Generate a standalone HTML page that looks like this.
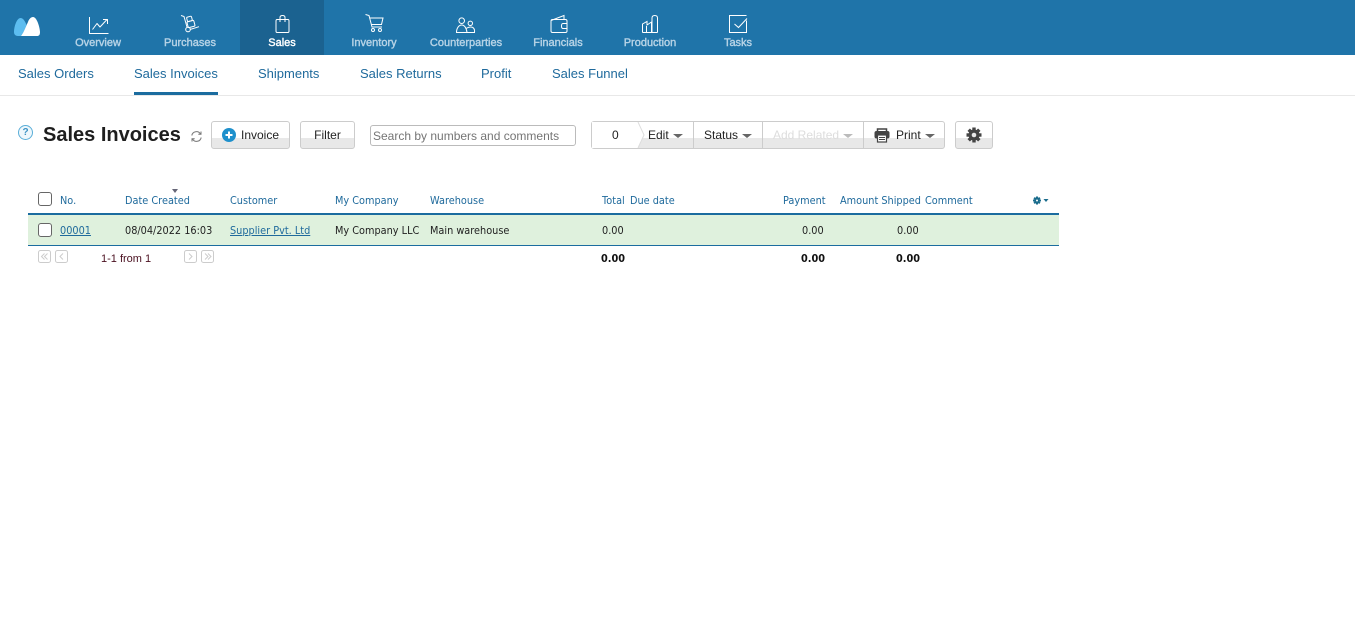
<!DOCTYPE html>
<html><head><meta charset="utf-8"><style>
html,body{margin:0;padding:0;width:1355px;height:631px;overflow:hidden;background:#fff;font-family:"Liberation Sans",sans-serif}
.a{position:absolute;white-space:nowrap}
#top{position:absolute;left:0;top:0;width:1355px;height:55px;background:#1f74a9}
.nl{position:absolute;top:37px;font-size:11px;line-height:13px;font-weight:normal;color:#b7d3e6;transform:translateX(-50%);white-space:nowrap;-webkit-text-stroke:.4px #b7d3e6}
.s{position:absolute;top:66px;font-size:13px;line-height:16px;color:#1f6a9c;white-space:nowrap}
.btn{position:absolute;box-sizing:border-box;height:28px;top:121px;border:1px solid #ccc;border-radius:3px;background:linear-gradient(#fff 0,#fff 16px,#e8e8e8 16px,#e8e8e8 100%);font-size:12px;color:#222;line-height:26px;white-space:nowrap}
.t{position:absolute;font-family:"DejaVu Sans",sans-serif;font-size:11px;line-height:13px;white-space:nowrap;transform:scaleX(.885);transform-origin:0 0}
.h{color:#1f6a9c;top:194px}
.r{color:#222;top:224px}
.b{font-weight:bold;font-size:11px;color:#111;top:252px}
.lnk{color:#1f6a9c;text-decoration:underline}
.car{display:inline-block;width:0;height:0;border-left:5px solid transparent;border-right:5px solid transparent;border-top:4px solid #666;vertical-align:1px;margin-left:4px}
.cb{position:absolute;box-sizing:border-box;width:14px;height:14px;left:38px;border:1px solid #666;border-radius:3px;background:#fff}
svg{position:absolute;overflow:visible}
</style></head><body>
<div id="top"></div>
<div class="a" style="left:240px;top:0;width:84px;height:55px;background:#1b6290"></div>

<svg style="left:14px;top:16px" width="27" height="21" viewBox="0 0 27 21">
<path d="M0 16C0 10 3 2 6.500 2C9 2 11 5 12.500 9C11 13 9 17 7 20H4C1 20 0 18 0 16z" fill="#5dbdf0"/>
<path d="M7 20C10 16 12 10 14 6C15 3 17 1 19 1C23 1 26 12 26 16C26 19 25 20 23 20z" fill="#fff"/>
</svg>

<svg style="left:89px;top:17px" width="20" height="17" fill="none" stroke="#fff" stroke-width="1"><path d="M0.500 0V16.500H19.500M3.500 12.500L8 6.500L11 10L18 2.500M14 2.500H18.500V7" stroke-linejoin="round"/></svg>
<svg style="left:180px;top:15px" width="20" height="19" fill="none" stroke="#fff" stroke-width="1"><path d="M1 0.500L4 1.500L7 12M10 14.500L19 11.700"/><circle cx="8" cy="14.500" r="2.300"/><rect x="7.500" y="6" width="7" height="6" rx="1" transform="rotate(-15 11 9)"/><rect x="7" y="1.500" width="5" height="4.500" rx="1" transform="rotate(-15 10 4)"/></svg>
<svg style="left:275px;top:15px" width="15" height="18" fill="none" stroke="#fff" stroke-width="1"><path d="M2 4.500H13Q14 4.500 14 6V16Q14 17.500 13 17.500H2Q1 17.500 1 16V6Q1 4.500 2 4.500zM5 7V2.500Q5 0.500 7.500 0.500T10 2.500V7"/></svg>
<svg style="left:365px;top:14px" width="19" height="19" fill="none" stroke="#fff" stroke-width="1"><path d="M0.500 0.500L4 1.500L7 13H17M4.500 4H18L16.500 10.500H6"/><circle cx="8" cy="16" r="1.500"/><circle cx="15" cy="16" r="1.500"/></svg>
<svg style="left:456px;top:17px" width="20" height="17" fill="none" stroke="#fff" stroke-width="1"><circle cx="5.700" cy="3.700" r="2.800"/><path d="M0.500 15.500C0.500 11 3 8 5.700 8S10.500 11 11 15.500H0.500z"/><circle cx="14.300" cy="6.300" r="2.200"/><path d="M11 15.500H18.500C19 12 17.500 10 14.500 10Q12.500 10 10 11.500"/></svg>
<svg style="left:550px;top:15px" width="18" height="18" fill="none" stroke="#fff" stroke-width="1"><path d="M1 5.500L14 0.500V4.500M2.500 4.500H15.500Q17 4.500 17 6V16Q17 17.500 15.500 17.500H2.500Q1 17.500 1 16V6Q1 4.500 2.500 4.500zM17 8.500H13Q11.500 8.500 11.500 11T13 13.500H17"/></svg>
<svg style="left:642px;top:15px" width="17" height="18" fill="none" stroke="#fff" stroke-width="1"><path d="M0.500 17.500V9L5 6.500V10L9.500 7V17.500M4.500 17.500V11M0.500 17.500H15.500M10 17.500V3Q10 0.500 12.750 0.500T15.500 3V17.500"/></svg>
<svg style="left:729px;top:15px" width="18" height="18" fill="none" stroke="#fff" stroke-width="1"><path d="M17.500 0.500H0.500V17.500H17.500V5.500"/><path d="M5.500 9L9.500 12.500L18 3.500"/></svg>

<div class="nl" style="left:98px">Overview</div>
<div class="nl" style="left:190px">Purchases</div>
<div class="nl" style="left:282px;color:#fff;-webkit-text-stroke:.4px #fff">Sales</div>
<div class="nl" style="left:374px">Inventory</div>
<div class="nl" style="left:466px">Counterparties</div>
<div class="nl" style="left:558px">Financials</div>
<div class="nl" style="left:650px">Production</div>
<div class="nl" style="left:738px">Tasks</div>

<div class="s" style="left:18px">Sales Orders</div>
<div class="s" style="left:134px">Sales Invoices</div>
<div class="s" style="left:258px">Shipments</div>
<div class="s" style="left:360px">Sales Returns</div>
<div class="s" style="left:481px">Profit</div>
<div class="s" style="left:552px">Sales Funnel</div>
<div class="a" style="left:134px;top:92px;width:84px;height:3px;background:#1b6c9f"></div>
<div class="a" style="left:0;top:95px;width:1355px;height:1px;background:#e8e8e8"></div>

<div class="a" style="left:18px;top:125px;width:15px;height:15px;box-sizing:border-box;border:1px solid #5aaed8;border-radius:50%;background:#eef7fc;color:#3d93c4;font-size:10px;font-weight:bold;line-height:13px;text-align:center">?</div>
<div class="a" style="left:43px;top:123px;font-size:20px;line-height:24px;font-weight:bold;color:#1e1e1e">Sales Invoices</div>
<svg style="left:191px;top:131px" width="11" height="11" fill="none" stroke="#777" stroke-width="1"><path d="M0.800 4.500A4.700 4.700 0 0 1 9.500 3M10 0.500V3.300H7.300M10.200 6.500A4.700 4.700 0 0 1 1.500 8M1 10.500V7.700H3.700"/></svg>

<div class="btn" style="left:211px;width:79px;padding-left:29px">Invoice</div>
<svg style="left:222px;top:128px" width="14" height="14"><circle cx="7" cy="7" r="7" fill="#1e90cc"/><path d="M7 3.500V10.500M3.500 7H10.500" stroke="#fff" stroke-width="2"/></svg>
<div class="btn" style="left:300px;width:55px;text-align:center">Filter</div>

<div class="a" style="left:370px;top:125px;width:206px;height:21px;box-sizing:border-box;border:1px solid #bbb;border-radius:3px;background:#fff;font-size:12px;line-height:20px;color:#757575;padding-left:2px">Search by numbers and comments</div>

<div class="btn" style="left:591px;width:354px"></div>
<svg style="left:592px;top:122px" width="60" height="26"><path d="M0 0H46L52 13L46 26H0z" fill="#fff"/><path d="M46 0L52 13L46 26" fill="none" stroke="#ddd"/></svg>
<div class="a" style="left:612px;top:128px;font-size:12px;line-height:14px;color:#222">0</div>
<div class="a" style="left:648px;top:128px;font-size:12px;line-height:14px;color:#222">Edit<span class="car"></span></div>
<div class="a" style="left:693px;top:122px;width:1px;height:26px;background:#ccc"></div>
<div class="a" style="left:704px;top:128px;font-size:12px;line-height:14px;color:#222">Status<span class="car"></span></div>
<div class="a" style="left:762px;top:122px;width:1px;height:26px;background:#ccc"></div>
<div class="a" style="left:773px;top:128px;font-size:12px;line-height:14px;color:#ddd">Add Related<span class="car" style="border-top-color:#bbb"></span></div>
<div class="a" style="left:863px;top:122px;width:1px;height:26px;background:#ccc"></div>
<svg style="left:874px;top:128px" width="16" height="15"><path d="M3.500 3V1H12.500V3" fill="none" stroke="#444" stroke-width="1.500"/><rect x="0.500" y="3" width="15" height="7.500" rx="2" fill="#444"/><rect x="3.500" y="7" width="9" height="7" fill="#fff" stroke="#444" stroke-width="1.200"/><path d="M5 9.500H11M5 11.500H11" stroke="#444"/></svg>
<div class="a" style="left:896px;top:128px;font-size:12px;line-height:14px;color:#222">Print<span class="car"></span></div>

<div class="btn" style="left:955px;width:38px"></div>
<svg style="left:966px;top:127px" width="16" height="16" viewBox="0 0 16 16"><g fill="#444"><circle cx="8" cy="8" r="5.500"/><rect x="6.300" y="0.500" width="3.400" height="15"/><rect x="6.300" y="0.500" width="3.400" height="15" transform="rotate(45 8 8)"/><rect x="6.300" y="0.500" width="3.400" height="15" transform="rotate(90 8 8)"/><rect x="6.300" y="0.500" width="3.400" height="15" transform="rotate(135 8 8)"/></g><circle cx="8" cy="8" r="2.300" fill="#e8e8e8"/></svg>

<div class="cb" style="top:192px"></div>
<div class="t h" style="left:60px">No.</div>
<div class="a" style="left:172px;top:189px;width:0;height:0;border-left:3.500px solid transparent;border-right:3.500px solid transparent;border-top:4px solid #667"></div>
<div class="t h" style="left:125px">Date Created</div>
<div class="t h" style="left:230px">Customer</div>
<div class="t h" style="left:335px">My Company</div>
<div class="t h" style="left:430px">Warehouse</div>
<div class="t h" style="left:602px">Total</div>
<div class="t h" style="left:630px">Due date</div>
<div class="t h" style="left:783px">Payment</div>
<div class="t h" style="left:840px">Amount Shipped</div>
<div class="t h" style="left:925px">Comment</div>
<svg style="left:1033px;top:196px" width="16" height="9" viewBox="0 0 16 9"><g fill="#1a6c8c"><circle cx="4" cy="4.500" r="3"/><rect x="3" y="0.500" width="2" height="8"/><rect x="0" y="3.500" width="8" height="2"/><rect x="3" y="0.500" width="2" height="8" transform="rotate(45 4 4.500)"/><rect x="3" y="0.500" width="2" height="8" transform="rotate(-45 4 4.500)"/><path d="M10.500 3H15.500L13 6z"/></g><circle cx="4" cy="4.500" r="1" fill="#fff"/></svg>

<div class="a" style="left:28px;top:213px;width:1031px;height:2px;background:#1b6c9f"></div>
<div class="a" style="left:28px;top:215px;width:1031px;height:30px;background:#dff1dd"></div>
<div class="a" style="left:28px;top:245px;width:1031px;height:1px;background:#1b6c9f"></div>
<div class="cb" style="top:223px"></div>
<div class="t r lnk" style="left:60px">00001</div>
<div class="t r" style="left:125px">08/04/2022 16:03</div>
<div class="t r lnk" style="left:230px">Supplier Pvt. Ltd</div>
<div class="t r" style="left:335px">My Company LLC</div>
<div class="t r" style="left:430px">Main warehouse</div>
<div class="t r" style="left:602px">0.00</div>
<div class="t r" style="left:802px">0.00</div>
<div class="t r" style="left:897px">0.00</div>

<svg style="left:38px;top:250px" width="177" height="13" fill="none" stroke="#ccc" stroke-width="1">
<rect x="0.500" y="0.500" width="12" height="12" rx="2"/><path d="M6.500 3.500L3.500 6.500L6.500 9.500M9.500 3.500L6.500 6.500L9.500 9.500"/>
<rect x="17.500" y="0.500" width="12" height="12" rx="2"/><path d="M25 3.500L22 6.500L25 9.500"/>
<rect x="146.500" y="0.500" width="12" height="12" rx="2"/><path d="M151 3.500L154 6.500L151 9.500"/>
<rect x="163.500" y="0.500" width="12" height="12" rx="2"/><path d="M167 3.500L170 6.500L167 9.500M170 3.500L173 6.500L170 9.500"/>
</svg>
<div class="a" style="left:101px;top:253px;font-size:11px;line-height:13px;color:#4a1020">1-1 from 1</div>
<div class="t b" style="left:601px">0.00</div>
<div class="t b" style="left:801px">0.00</div>
<div class="t b" style="left:896px">0.00</div>
</body></html>
